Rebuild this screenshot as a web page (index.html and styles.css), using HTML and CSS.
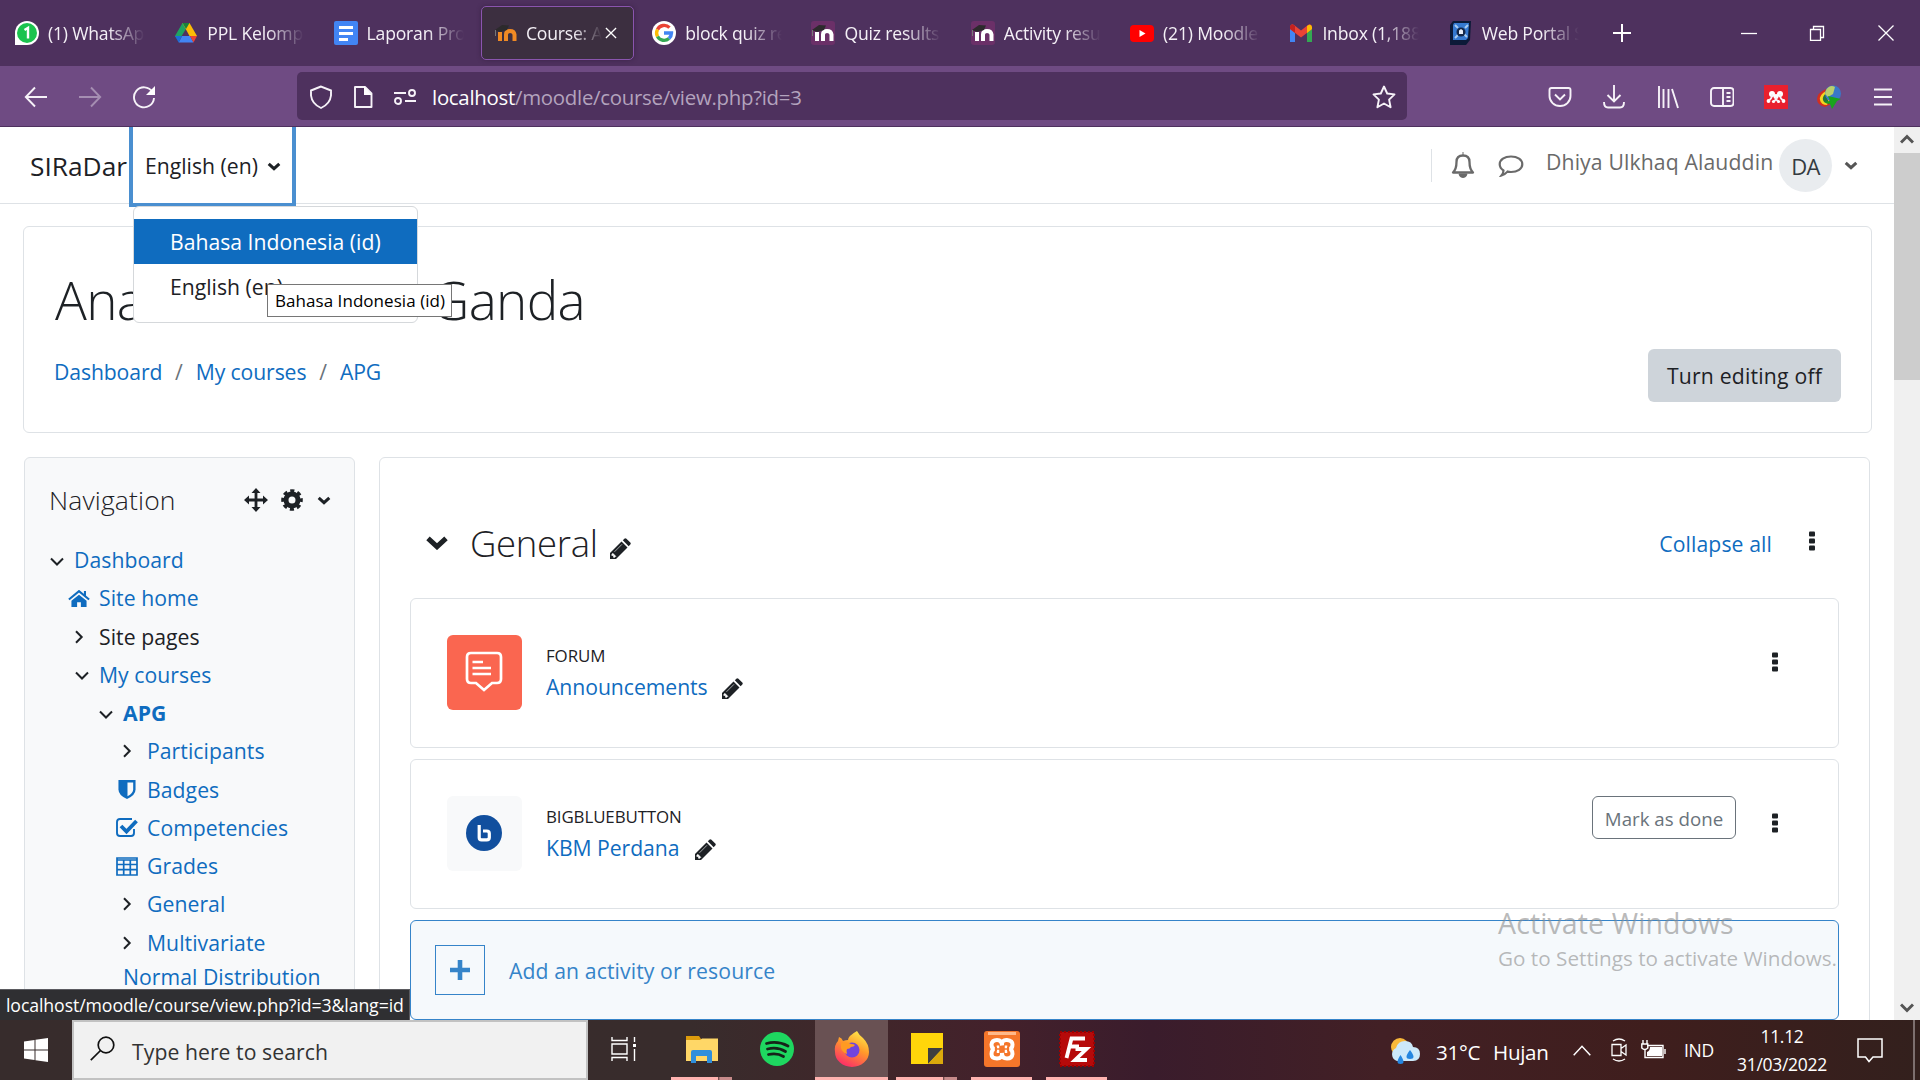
FILE: index.html
```html
<!DOCTYPE html>
<html lang="en">
<head>
<meta charset="utf-8">
<title>Course: Analisis Peubah Ganda</title>
<link rel="stylesheet" href="styles.css">
</head>
<body>
<svg class="defs" width="0" height="0">
  <defs>
    <symbol id="down" viewBox="0 0 14 9"><path d="M1 1.500 7 7.500l6-6" fill="none" stroke="currentColor" stroke-width="2"/></symbol>
    <symbol id="down-bold" viewBox="0 0 14 9"><path d="M1.700 1.800 7 6.700l5.300-4.900" fill="none" stroke="currentColor" stroke-width="3"/></symbol>
    <symbol id="right" viewBox="0 0 9 14"><path d="M1.500 1.200 7.200 7l-5.700 5.800" fill="none" stroke="currentColor" stroke-width="2"/></symbol>
    <symbol id="pencil" viewBox="0 0 21 21"><path d="M0 21v-6L11.500 3.500l6 6L6 21z"/><path d="M12.800 2.300 14.400.7q1-.9 2 0l3.900 3.900q.9 1 0 2l-1.600 1.600z"/><path d="M1.800 16.500v1h1.700v1.800h1.300l1-1-3-3zM4.500 13.800 12 6.300" fill="#fff" stroke="#fff" stroke-width=".6"/></symbol>
    <symbol id="kebab" viewBox="0 0 6 20"><rect width="6" height="5" y=".5" rx="1"/><rect width="6" height="5" y="7.500" rx="1"/><rect width="6" height="5" y="14.500" rx="1"/></symbol>
    <symbol id="moodle" viewBox="0 0 24 24"><path d="M6 20v-9M12 20v-6.500q0-3.500 4-3.500t4.500 3.500V20" fill="none" stroke="currentColor" stroke-width="4"/><path d="M1 9 8 4l7 .5L13 9l-7 2z" fill="#2c2a2c"/><path d="M1.500 9v6" stroke="#777" stroke-width="1"/></symbol>
  </defs>
</svg>

<header class="tabs">
  <div class="tab"><svg viewBox="0 0 24 24"><path d="M0 24V12A12 12 0 1 1 12 24z" fill="#fff"/><circle cx="12" cy="12" r="10" fill="#1bc34f"/><path d="M9.500 9 13 6.800V17.500" fill="none" stroke="#fff" stroke-width="2.400"/></svg><span>(1) WhatsApp</span></div>
  <div class="tab"><svg viewBox="0 0 24 24"><path d="M8.500 2h7l-4 6.500L4.700 20 1 15z" fill="#1ea362"/><path d="M15.500 2 23 15h-7.500L8.500 2z" fill="#fcbc05"/><path d="M8.500 2h7L12 8z" fill="#18813c"/><path d="M4.700 21.500 8 15h8l3.500 6.500z" fill="#4285f4"/><path d="M1 15h7l-3.300 6.500z" fill="#1a6ed8"/><path d="M16 15h7l-3.500 6.500z" fill="#ea4335"/></svg><span>PPL Kelompok</span></div>
  <div class="tab"><svg viewBox="0 0 24 24"><rect width="24" height="24" rx="2" fill="#4285f4"/><path d="M5 6.500h14M5 12.500h14M5 18.500h9" stroke="#fff" stroke-width="2.800"/></svg><span>Laporan Proyek</span></div>
  <div class="tab active"><svg class="orange" viewBox="0 0 24 24"><use href="#moodle"/></svg><span>Course: Analisis</span><svg class="x" viewBox="0 0 13 13"><path d="m1 1 11 11M12 1 1 12" stroke="#fff" stroke-width="1.400"/></svg></div>
  <div class="tab"><svg viewBox="0 0 24 24"><circle cx="12" cy="12" r="12" fill="#fff"/><g fill="none" stroke-width="3.400"><path d="M17.500 6.600A7.500 7.500 0 0 0 5.500 8.500" stroke="#ea4335"/><path d="M5.500 8.500a7.500 7.500 0 0 0 0 7" stroke="#fbbc05"/><path d="M5.500 15.500a7.500 7.500 0 0 0 11.500 2" stroke="#34a853"/><path d="M17 17.500a7.500 7.500 0 0 0 2.500-5.500H12" stroke="#4285f4"/></g></svg><span>block quiz results</span></div>
  <div class="tab"><svg class="plum" viewBox="0 0 24 24"><use href="#moodle"/></svg><span>Quiz results</span></div>
  <div class="tab"><svg class="plum" viewBox="0 0 24 24"><use href="#moodle"/></svg><span>Activity results</span></div>
  <div class="tab"><svg viewBox="0 0 24 24"><rect y="4" width="24" height="17" rx="4" fill="#f00"/><path d="m9.500 9 6 3.500-6 3.500z" fill="#fff"/></svg><span>(21) Moodle</span></div>
  <div class="tab"><svg viewBox="0 0 24 24"><path d="M1 6v15h5V10z" fill="#4285f4"/><path d="M18 10v11h5V6z" fill="#34a853"/><path d="M1 6q1-4 4-2l7 5.500L19 4q3-2 4 2v2l-11 8.500L1 8z" fill="#ea4335"/><path d="M18 5q4-3 5 1v2l-5 4z" fill="#fbbc04"/><path d="M1 6q0-3 3-2.500L6 5v7L1 8z" fill="#c5221f"/></svg><span>Inbox (1,188)</span></div>
  <div class="tab"><svg viewBox="0 0 24 24"><path d="M4 0h18l-1 19-4 5H1V4z" fill="#0c1a38"/><path d="M5 2h15l-1 15-2 2H4V4z" fill="#3579d0"/><path d="m6 4 3 3M19 4l-3 3M6 17l3-3m9 2-3-3" stroke="#a9cdf2" stroke-width="2"/><circle cx="12" cy="11" r="4.500" fill="#142748"/><path d="M10 13V9.500l2-1.500 2 1.500V13z" fill="#e8eef8"/></svg><span>Web Portal Siakad</span></div>
  <svg class="plus" viewBox="0 0 18 18"><path d="M9 0v18M0 9h18" stroke="#fff" stroke-width="2"/></svg>
  <div class="window-buttons">
    <svg viewBox="0 0 16 16"><path d="M0 8.500h16" stroke="#fff" stroke-width="1.300"/></svg>
    <svg viewBox="0 0 16 16"><path d="M1.500 4.500h10v11h-10zM4.500 4V1.500h10v11H12" fill="none" stroke="#fff" stroke-width="1.300"/></svg>
    <svg viewBox="0 0 16 16"><path d="m.5.500 15 15M15.500.500l-15 15" stroke="#fff" stroke-width="1.300"/></svg>
  </div>
</header>

<div class="toolbar">
  <div class="history">
    <svg viewBox="0 0 24 24"><path d="M23 12H2M11 2.500 1.800 12 11 21.500" /></svg>
    <svg class="dim" viewBox="0 0 24 24"><path d="M1 12h21M13 2.500 22.200 12 13 21.500"/></svg>
    <svg viewBox="0 0 24 24"><path d="M20.500 7A10 10 0 1 0 22 13"/><path d="M23 1v9h-9z" fill="#fff" stroke="none"/></svg>
  </div>
  <div class="url">
    <svg viewBox="0 0 24 24"><path d="M12 1.500 2 5.500v5Q3 19 12 23q9-4 10-12.500v-5z"/></svg>
    <svg viewBox="0 0 24 24"><path d="M4 2h10l6.500 6.500V22H4z" stroke-linejoin="round"/><path d="M13 1v9h8z" fill="#fff" stroke="none"/></svg>
    <svg viewBox="0 0 24 24"><path d="M1 8h12M12 16h11"/><circle cx="19" cy="8" r="3"/><circle cx="5" cy="16" r="3"/></svg>
    <p><b>localhost</b>/moodle/course/view.php?id=3</p>
    <svg viewBox="0 0 24 24"><path d="m12 1.500 3.200 7 7.300.9-5.400 5.200 1.500 7.700-6.600-3.800-6.600 3.800 1.500-7.700L1.500 9.400l7.300-.9z" stroke-linejoin="round"/></svg>
  </div>
  <div class="tools">
    <svg viewBox="0 0 24 24"><path d="M3.500 3h17q2 0 2 2v6a10.500 10 0 0 1-21 0V5q0-2 2-2zM7 9.500l5 5 5-5"/></svg>
    <svg viewBox="0 0 24 24"><path d="M12 0v16M5.500 10l6.500 6.500 6.500-6.500M2 17q0 5.500 4 5.500h12q4 0 4-5.500"/></svg>
    <svg viewBox="0 0 24 24"><path d="M3 1v22M7.500 4v19M12.500 4v19M16 4l6 19"/></svg>
    <svg viewBox="0 0 24 24"><rect x="1" y="3" width="22.500" height="18" rx="3"/><path d="M13 3v18M16.500 8h4M16.500 12h4M16.500 16h4"/></svg>
    <svg viewBox="0 0 24 24"><path d="M0 0h24v24H0z" fill="#e9202e" stroke="none"/><g fill="#fff" stroke="none"><circle cx="8" cy="9" r="3"/><circle cx="16" cy="9" r="3"/><circle cx="12" cy="11.500" r="2.500"/><circle cx="4.500" cy="16" r="1.900"/><circle cx="19.500" cy="16" r="1.900"/><circle cx="9.500" cy="16.500" r="1.600"/><circle cx="14.500" cy="16.500" r="1.600"/></g><path d="M5 15q3-1 3-6m11 6q-3-1-3-6M9.500 16.500q2.500-1 2.500-4 0 3 2.500 4" stroke-width="1.800"/></svg>
    <svg viewBox="0 0 24 24"><g stroke="none"><path d="M9 4Q0 8 0 14q0 6 8 8l6-3-6-6z" fill="#d22f20"/><path d="M9 6q-7 4-6 9t7 5l2-4z" fill="#f4d520"/><path d="M9 8q-4 4-3 7t6 4z" fill="#23743b"/><circle cx="16" cy="8.500" r="8" fill="#3a78c8"/><path d="M9 5q4-6 9-3l-2 7-5 3-3-3z" fill="#b9cf6c"/><path d="m11 11 13 3-4 2-5 8-2-5-6-2 6-1z" fill="#18a41c"/></g></svg>
    <svg viewBox="0 0 24 24"><path d="M3 4.500h18M3 12h18M3 19.500h18"/></svg>
  </div>
</div>

<div class="viewport">
  <main class="page">
    <nav class="navbar">
      <span class="brand">SIRaDar</span>
      <div class="lang">
        <span>English (en)</span><svg width="14" height="9"><use href="#down-bold"/></svg>
        <div class="menu">
          <a class="hover">Bahasa Indonesia (id)</a>
          <a>English (en)</a>
          <div class="tip">Bahasa Indonesia (id)</div>
        </div>
      </div>
      <div class="user">
        <i class="rule"></i>
        <svg class="bell" width="24" height="26" viewBox="0 0 24 26"><path d="M2 20.500Q5.500 17 5.500 10q0-6.500 6.500-6.500t6.500 6.500q0 7 3.500 10.500z" fill="none" stroke="currentColor" stroke-width="2.300" stroke-linejoin="round"/><path d="M12 0v4M8 22h8q-.5 3.500-4 3.500T8 22z" fill="currentColor" stroke="currentColor"/></svg>
        <svg class="chat" width="26" height="22" viewBox="0 0 26 22"><path d="M13 1.500c6.500 0 11.300 3.300 11.300 7.800S19.500 17 13 17q-2 0-3.500-.4Q7 19.500 3.500 20.500q2-2.500 2-5Q1.700 13 1.700 9.300C1.700 4.800 6.500 1.500 13 1.500z" fill="none" stroke="currentColor" stroke-width="2.200"/></svg>
        <span class="name">Dhiya Ulkhaq Alauddin</span>
        <span class="avatar">DA</span>
        <svg class="caret" width="14" height="9"><use href="#down-bold"/></svg>
      </div>
    </nav>

    <section class="card head">
      <h1>Analisis Peubah Ganda</h1>
      <div class="sub">
        <p class="crumbs"><a>Dashboard</a><i>/</i><a>My courses</a><i>/</i><a>APG</a></p>
        <button class="edit">Turn editing off</button>
      </div>
    </section>

    <div class="columns">
      <aside class="card side">
        <div class="side-head">
          <h2>Navigation</h2>
          <svg width="24" height="24" viewBox="0 0 24 24"><path d="M12 3v18M3 12h18" stroke="currentColor" stroke-width="2.800"/><path d="m12 0 4.500 5h-9zM12 24l4.500-5h-9zM0 12l5-4.500v9zM24 12l-5-4.500v9z"/></svg>
          <svg class="gear" width="22" height="22" viewBox="0 0 22 22"><circle cx="11" cy="11" r="6" fill="none" stroke="currentColor" stroke-width="5"/><circle cx="11" cy="11" r="9" fill="none" stroke="currentColor" stroke-width="3.600" stroke-dasharray="4 3.070" stroke-dashoffset="2"/></svg>
          <svg class="caret" width="14" height="9"><use href="#down-bold"/></svg>
        </div>
        <ul class="tree">
          <li><svg class="down"><use href="#down"/></svg><a>Dashboard</a></li>
          <li class="l1"><svg class="blue home" viewBox="0 0 23 18"><path d="M11.500 5 3.500 11.500V18H9.500v-5h4v5h6v-6.500z"/><path d="m.8 10 10.700-8.800L22.200 10M17.800 1v6" fill="none" stroke="currentColor" stroke-width="2.200"/></svg><a>Site home</a></li>
          <li class="l1"><svg class="right"><use href="#right"/></svg><span>Site pages</span></li>
          <li class="l1"><svg class="down"><use href="#down"/></svg><a>My courses</a></li>
          <li class="l2"><svg class="down"><use href="#down"/></svg><a class="bold">APG</a></li>
          <li class="l3"><svg class="right"><use href="#right"/></svg><a>Participants</a></li>
          <li class="l3"><svg class="blue" viewBox="0 0 18 20"><path d="M0 0h18v10q0 6-9 10Q0 16 0 10z"/><path d="M9.500 2.500h6V10q0 4-6 7z" fill="#f8f9fa"/></svg><a>Badges</a></li>
          <li class="l3"><svg class="blue" viewBox="0 0 22 19"><path d="M16 1H4Q1 1 1 4v11q0 3 3 3h11q3 0 3-3v-4" fill="none" stroke="currentColor" stroke-width="1.900"/><path d="m5 8 5.500 5.500L20.500 3" fill="none" stroke="currentColor" stroke-width="3.800"/></svg><a>Competencies</a></li>
          <li class="l3"><svg class="blue" viewBox="0 0 22 19"><path d="M1 1h20v17H1zM1 3h20M1 7.500h20M1 12.700h20M7.700 3v15M14.300 3v15" fill="none" stroke="currentColor" stroke-width="1.700"/></svg><a>Grades</a></li>
          <li class="l3"><svg class="right"><use href="#right"/></svg><a>General</a></li>
          <li class="l3"><svg class="right"><use href="#right"/></svg><a>Multivariate</a></li>
          <li class="wrap"><a>Normal Distribution</a></li>
        </ul>
      </aside>

      <section class="card course">
        <div class="section-head">
          <svg width="22" height="14" viewBox="0 0 22 14"><path d="m2 2.300 9 8.400 9-8.400" fill="none" stroke="currentColor" stroke-width="5"/></svg>
          <h3>General</h3>
          <svg class="pen" width="21" height="21"><use href="#pencil"/></svg>
          <a class="collapse">Collapse all</a>
          <svg class="kebab" width="6" height="20"><use href="#kebab"/></svg>
        </div>
        <article class="activity">
          <div class="logo forum"><svg width="38" height="42" viewBox="0 0 38 42"><path d="M6 2h26q4 0 4 4v22q0 4-4 4h-5l-8 7-8-7H6q-4 0-4-4V6q0-4 4-4z" fill="none" stroke="#fff" stroke-width="2.700"/><path d="M7.500 11H18M7.500 17H26M7.500 23H26" stroke="#fff" stroke-width="2.600"/></svg></div>
          <div class="info"><small>FORUM</small><p><a>Announcements</a><svg width="21" height="21"><use href="#pencil"/></svg></p></div>
          <svg class="kebab" width="6" height="20"><use href="#kebab"/></svg>
        </article>
        <article class="activity">
          <div class="logo"><svg width="36" height="36" viewBox="0 0 36 36"><circle cx="18" cy="18" r="18" fill="#114f9e"/><path d="M13.200 10v12.500q0 2.300 2.300 2.300h5.200q2.600 0 2.600-2.300v-4q0-2.500-2.600-2.500H17" fill="none" stroke="#fff" stroke-width="3.200"/></svg></div>
          <div class="info"><small>BIGBLUEBUTTON</small><p><a>KBM Perdana</a><svg class="far" width="21" height="21"><use href="#pencil"/></svg></p></div>
          <button class="done">Mark as done</button>
          <svg class="kebab" width="6" height="20"><use href="#kebab"/></svg>
        </article>
        <div class="add">
          <span class="box"><svg width="20" height="20" viewBox="0 0 20 20"><path d="M10 0v20M0 10h20" stroke="currentColor" stroke-width="4.600"/></svg></span>
          <span class="label">Add an activity or resource</span>
        </div>
      </section>
    </div>
  </main>
  <div class="scrollbar">
    <svg viewBox="0 0 14 9" width="14" height="10"><path d="M1 8l6-6 6 6" fill="none" stroke="#555" stroke-width="3"/></svg>
    <i></i>
    <svg viewBox="0 0 14 9" width="14" height="10"><path d="M1 1l6 6 6-6" fill="none" stroke="#555" stroke-width="3"/></svg>
  </div>
  <div class="status">localhost/moodle/course/view.php?id=3&amp;lang=id</div>
  <div class="watermark"><p>Activate Windows</p><span>Go to Settings to activate Windows.</span></div>
</div>

<footer class="taskbar">
  <div class="start"><svg width="24" height="24" viewBox="0 0 24 24"><path d="M0 3.500 10.500 2v9.500H0zM11.500 1.800 24 0v11.500H11.500zM0 12.500h10.500V22L0 20.500zM11.500 12.500H24V24l-12.500-1.800z" fill="#fff"/></svg></div>
  <div class="search"><svg width="25" height="25" viewBox="0 0 25 25"><circle cx="16" cy="9" r="7.800" fill="none" stroke="#111" stroke-width="1.700"/><path d="M10.500 14.500.8 24.200" stroke="#111" stroke-width="1.700"/></svg><span>Type here to search</span></div>
  <div class="apps">
    <div><svg width="26" height="24" viewBox="0 0 26 24"><path d="M1 0v3.500h15V0M1 24v-3.500h15V24M1 7h15v10H1zM23.500 0v5M23.500 12v12" fill="none" stroke="#fff" stroke-width="1.400"/><path d="M22 7h3v3h-3z" fill="#fff"/></svg></div>
    <div class="open multi"><svg width="32" height="28" viewBox="0 0 32 28"><path d="M0 1h13l2 3v5H0z" fill="#dc9b0c"/><path d="M0 5h14l2-1.500h16V26H0z" fill="#ffd767"/><path d="M5 28V17q0-2 2-2h17q2 0 2 2v11h-5v-7H10v7z" fill="#2f8fdc"/></svg></div>
    <div><svg width="34" height="34" viewBox="0 0 34 34"><circle cx="17" cy="17" r="17" fill="#1ed760"/><path d="M6.500 11.500q11-3 21.500 2.500M7.500 17q10-2.500 18 2.500M8.500 22.500q8.500-2 15 2" fill="none" stroke="#16231a" stroke-width="2.800" stroke-linecap="round"/></svg></div>
    <div class="open current"><svg width="36" height="36" viewBox="0 0 36 36"><defs><linearGradient id="fx" x1=".8" y1="0" x2=".3" y2="1"><stop offset="0" stop-color="#fff04d"/><stop offset=".45" stop-color="#ff9a2a"/><stop offset="1" stop-color="#fb2a6a"/></linearGradient></defs><path d="M23 0q2 4 6 7 6 6 6 14a17 15 0 0 1-34 0Q0 14 4 10l1-4q3 1 4 4 3-1 5-1 0-4 9-9z" fill="url(#fx)"/><circle cx="18" cy="19" r="7.500" fill="#7244dc"/><path d="M7 12q6-2 10 1 3 0 4 1-1 2-4 2-1 2-4 2-1 2 0 5-5-2-6-6z" fill="#ff9a22"/></svg></div>
    <div class="open multi"><svg width="32" height="33" viewBox="0 0 32 33"><path d="M0 1h32v31H0z" fill="#ffd60a"/><path d="M17 16h15L17 32z" fill="#3e3e40"/><path d="M32 16v16H17z" fill="#dba90c"/></svg></div>
    <div class="open"><svg width="36" height="36" viewBox="0 0 36 36"><rect width="36" height="36" rx="3" fill="#f5762a"/><path d="M4 1h28v3H4z" fill="#ffb98a"/><path d="M18 14.500q0-5.500-5-5.500t-5.500 4.500q0 4 3 4.500-3 .5-3 5t5.500 4.500 5-5.500q0 5.500 5 5.500t5.500-4.500q0-4.500-3-5 3-.5 3-4.500T23 9t-5 5.500" fill="none" stroke="#fff" stroke-width="4"/><path d="M14 14.500v1.500h-1M22 14.500v1.500h1M14 22v-2h-1M22 22v-2h1" fill="none" stroke="#fff" stroke-width="2.500"/></svg></div>
    <div class="open"><svg width="36" height="36" viewBox="0 0 36 36"><rect x="1" y="1" width="34" height="34" fill="#b60a0a" stroke="#a00000" stroke-width="2" stroke-dasharray="2 2"/><path d="M7.500 27 12.500 7.500H26M10.500 15.500h9.500M16.500 18h11L16 29h12" fill="none" stroke="#fff" stroke-width="3.800"/></svg></div>
  </div>
  <div class="tray">
    <svg class="weather" width="31" height="27" viewBox="0 0 31 27"><circle cx="10" cy="10" r="9" fill="#f9b93a"/><path d="M7 24a7 7 0 0 1-1-13q2-7 9-7t8 6q7 0 7 7t-7 7z" fill="#cde9fa"/><path d="M10.500 18q6 9 0 9t0-9zM20 13q7 9 0 9t0-9z" fill="#2586e0"/></svg>
    <span class="temp">31°C</span><span class="hujan">Hujan</span>
    <svg class="up" width="18" height="11" viewBox="0 0 18 11"><path d="m.7 10.300 8.300-9 8.300 9" fill="none" stroke="#fff" stroke-width="1.500"/></svg>
    <svg class="cam" width="17" height="24" viewBox="0 0 17 24"><path d="M2 3q6-4 12 0M2 21q6 4 12 0M1 6.500h9v11H1zM10 10.500l5-3.500v10l-5-3.500" fill="none" stroke="#fff" stroke-width="1.300"/></svg>
    <svg class="bat" width="25" height="20" viewBox="0 0 25 20"><path d="M6 5.500h16v12H4V12M24 9v5M2 0v4M6 0v4M.8 4h6v4q-3 3-6 0zM4 9v4" fill="none" stroke="#fff" stroke-width="1.400"/><path d="M9 7h12v9H6v-4q3-1 3-5z" fill="#fff"/></svg>
    <span class="ind">IND</span>
    <p class="clock"><span>11.12</span><span>31/03/2022</span></p>
    <svg class="note" width="26" height="25" viewBox="0 0 26 25"><path d="M1 1h24v18h-9l-4 4.500L8.500 19H1z" fill="none" stroke="#fff" stroke-width="1.500"/></svg>
    <i class="peek"></i>
  </div>
</footer>
</body>
</html>
```
FILE: styles.css
```css
* { box-sizing: border-box; }
body { margin: 0; width: 1920px; height: 1080px; overflow: hidden; background: #fff; color: #1d2125; font: 21.2px/30px "Open Sans", "Noto Sans", sans-serif; letter-spacing: .05px; display: flex; flex-direction: column; }
h1, h2, h3, p, ul { margin: 0; padding: 0; }
h1, h2, h3 { font-weight: 300; }
i { font-style: normal; }
button { font: inherit; letter-spacing: inherit; padding: 0; }
svg { flex: none; fill: currentColor; display: block; }
.defs { position: absolute; }
a { color: #0f6cbf; white-space: nowrap; }

.tabs { height: 66px; background: #4e315e; color: #f4f0f6; display: flex; align-items: center; padding-left: 2px; font-size: 17.6px; letter-spacing: -.2px; }
.tab { flex: none; width: 159.300px; height: 54px; padding: 0 0 0 13px; display: flex; align-items: center; gap: 9px; }
.tab > svg { width: 24px; height: 24px; }
.tab span { width: 97px; overflow: hidden; white-space: nowrap; -webkit-mask-image: linear-gradient(to right, #000 62%, transparent 100%); mask-image: linear-gradient(to right, #000 62%, transparent 100%); }
.tab.active { width: 153px; margin: 0 5.300px 0 1px; padding-left: 12px; gap: 8px; background: #3c2f40; border: 1px solid #8a55ae; border-radius: 5px; box-shadow: 0 0 4px #3b2447; }
.tab.active span { width: 76px; }
.tab.active .x { width: 12px; height: 12px; margin-left: -5px; }
.orange { color: #f08a24; }
.plum { color: #fff; background: #6b3068; border-radius: 3px; }
.plus { width: 18px; height: 18px; margin-left: 18px; }
.window-buttons { display: flex; gap: 52.500px; margin-left: 110px; }
.window-buttons svg { width: 16px; height: 16px; }

.toolbar { height: 61px; background: #6f4b83; border-bottom: 1px solid #4e315e; display: flex; align-items: center; color: #fff; }
.toolbar svg { width: 24px; height: 24px; fill: none; stroke: #f6f2f8; stroke-width: 1.900; }
.history { width: 297px; padding: 1px 0 0 24px; display: flex; gap: 30px; }
.history .dim { opacity: .4; }
.url { width: 1110px; height: 48px; border-radius: 5px; background: #4e315e; display: flex; align-items: center; padding: 1px 11px 0 12px; gap: 18px; }
.url p { flex: 1; margin: 1px 0 0 -3px; font-size: 20.400px; color: #b3a3bd; letter-spacing: -.27px; }
.url b { font-weight: 400; color: #fff; }
.tools { display: flex; gap: 29.900px; margin-left: 141px; padding-top: 1px; }

.viewport { height: 893px; display: flex; position: relative; }
.page { width: 1894px; height: 893px; overflow: hidden; }
.navbar { height: 77px; border-bottom: 1px solid #dee2e6; display: flex; align-items: center; }
.brand { width: 129px; padding: 1px 0 0 30px; font-size: 26.300px; letter-spacing: 0; }
.lang { position: relative; align-self: flex-start; width: 167px; height: 80px; border: 4px solid #4a8fd0; border-top: 0; background: #fff; display: flex; align-items: center; padding: 2px 0 0 12px; gap: 7px; z-index: 3; }
.lang > span { width: 115px; white-space: nowrap; letter-spacing: 0; }
.menu { position: absolute; left: 0; top: 79px; width: 285px; height: 117px; padding-top: 12px; border: 1px solid #d5d8db; border-radius: 6px; background: #fff; }
.menu a { display: block; height: 46px; line-height: 46px; padding-left: 36px; color: #1d2125; letter-spacing: 0; }
.menu .hover { background: #0f6cbf; color: #fff; height: 45px; }
.tip { position: absolute; left: 133px; top: 77px; width: 185px; height: 33px; border: 1px solid #767676; background: #fff; color: #000; font-size: 17px; line-height: 32px; padding-left: 7px; white-space: nowrap; }
.user { margin-left: auto; display: flex; align-items: center; color: #6a6a6a; padding-right: 36px; }
.rule { width: 1px; height: 33px; background: #dee2e6; }
.bell { margin-left: 19px; }
.chat { margin: 2px 0 0 23px; }
.name { width: 233px; margin: -7px 0 0 22px; white-space: nowrap; letter-spacing: .13px; }
.avatar { width: 53px; height: 53px; border-radius: 50%; background: #e9ecef; color: #343a40; text-align: center; line-height: 54px; font-size: 22px; letter-spacing: -.6px; }
.user .caret { margin-left: 12px; color: #555; }

.card { border: 1px solid #dee2e6; border-radius: 6px; }
.head { margin: 22px 0 0 23px; width: 1849px; height: 207px; padding: 37px 30px 0 31px; }
h1 { font-size: 53px; line-height: 72px; letter-spacing: -.65px; }
.sub { display: flex; justify-content: space-between; align-items: flex-start; padding-top: 1px; margin-left: -1px; }
.crumbs { display: flex; padding-top: 20px; }
.crumbs i { width: 33.500px; text-align: center; color: #6a737b; }
.crumbs a { letter-spacing: -.12px; }
.edit { width: 193px; height: 53px; margin-top: 12px; border: 0; border-radius: 6px; background: #ced4da; color: #1d2125; letter-spacing: .2px; }

.columns { display: flex; align-items: flex-start; margin: 24px 0 0 24px; gap: 24px; }
.side { width: 331px; height: 600px; background: #f8f9fa; }
.side-head { display: flex; align-items: center; height: 44px; margin-top: 20px; padding-left: 24px; }
h2 { width: 195px; font-size: 26.500px; letter-spacing: .15px; }
.gear { margin-left: 13px; }
.side-head .caret { margin-left: 14px; }
.tree { list-style: none; margin-top: 19px; }
.tree li { height: 38.250px; display: flex; align-items: center; padding-left: 15px; }
.tree li.l1 { padding-left: 40px; }
.tree li.l2 { padding-left: 64px; }
.tree li.l3 { padding-left: 85px; }
.tree svg { width: 34px; height: 14px; margin-right: 3px; }
.tree .l1 svg { margin-left: -3px; }
.tree .down, .tree .l1 .down { height: 9px; margin: 2px 0 0; }
.tree .blue { height: 19px; color: #0f6cbf; }
.tree .home { height: 17px; }
.bold { font-weight: 700; }
.tree .wrap { height: 30px; padding-left: 98px; }

.course { width: 1491px; height: 600px; padding: 55px 30px 0; }
.section-head { display: flex; align-items: center; height: 60px; padding-left: 16px; }
h3 { width: 126px; margin-left: 22px; font-size: 36.500px; line-height: 50px; letter-spacing: -.3px; white-space: nowrap; }
.pen { margin: 10px 0 0 14px; }
.collapse { margin: 2px 0 0 auto; letter-spacing: .1px; }
.section-head .kebab { margin: -5px 24px 0 37px; }
.activity { width: 1429px; height: 150px; margin-bottom: 11px; border: 1px solid #dee2e6; border-radius: 6px; display: flex; padding: 36px 0 0 36px; }
.section-head + .activity { margin-top: 25px; }
.logo { width: 75px; height: 75px; border-radius: 6px; background: #f8f9fa; display: grid; place-items: center; padding: 0 1px 1px 0; }
.forum { background: #fa6650; }
.info { margin: 6px auto 0 24px; }
.info small { display: block; font-size: 16.900px; line-height: 30px; letter-spacing: -.1px; }
.info p { display: flex; align-items: center; gap: 14px; height: 32px; letter-spacing: -.05px; }
.info p svg { margin-top: 2px; }
.info p .far { margin-left: 2px; }
.activity .kebab { margin: 17px 60px 0 36px; }
.done { width: 144px; height: 43px; border: 1px solid #6a737b; border-radius: 6px; background: #fff; color: #6a737b; font-size: 18.700px; padding-top: 2px; letter-spacing: 0; }
.add { width: 1429px; height: 100px; border: 1px solid #3584c9; border-radius: 6px; background: #f5f9fc; color: #3584c9; display: flex; align-items: center; padding-left: 24px; gap: 24px; }
.box { width: 50px; height: 50px; border: 1px solid #3584c9; display: grid; place-items: center; }
.label { letter-spacing: .1px; padding-top: 2px; }

.scrollbar { width: 26px; background: #f0f0f0; display: flex; flex-direction: column; align-items: center; padding: 7px 0; }
.scrollbar i { width: 26px; height: 227px; margin: 9px 0 auto; background: #cdcdcd; }
.status { position: absolute; left: 0; bottom: 0; width: 410px; height: 31px; background: #2f2f32; border-top: 1px solid #5b5b60; border-right: 1px solid #5b5b60; color: #fff; font-size: 17.700px; line-height: 30px; padding-left: 6px; letter-spacing: -.1px; white-space: nowrap; }
.watermark { position: absolute; left: 1498px; top: 776px; color: rgba(140, 140, 140, .6); white-space: nowrap; }
.watermark p { font-size: 28.500px; line-height: 40px; letter-spacing: .12px; }
.watermark span { font-size: 20.700px; line-height: 30px; letter-spacing: 0; }

.taskbar { height: 60px; display: flex; color: #fff; background: linear-gradient(90deg, #372c2c 0, #382c2c 36%, #40262a 45%, #43212b 52%, #3a1c2c 60%, #422025 72%, #3f1e1d 86%, #33201d 100%); }
.start { width: 72px; display: grid; place-items: center; }
.search { width: 516px; background: #f1f1f1; border: 2px solid #c2c2c2; display: flex; align-items: center; padding-left: 16px; gap: 17px; color: #333; }
.search svg { margin-bottom: 4px; }
.search span { padding-top: 3px; }
.apps { display: flex; padding-left: 1px; }
.apps div { width: 75px; display: grid; place-items: center; padding-bottom: 3px; }
.apps div:first-child { padding-right: 5px; }
.apps .open { background: linear-gradient(#ffb3b0, #ffb3b0) 50% 100% / 61px 3px no-repeat; }
.apps .multi { background: linear-gradient(90deg, #ffb3b0 47px, #55383a 47px, #c78b8b 49px) 50% 100% / 61px 3px no-repeat; }
.apps .current { width: 73px; margin: 0 1px; background: linear-gradient(#ffb3b0, #ffb3b0) 0 100% / 100% 3px no-repeat #695153; }
.tray { margin-left: auto; display: flex; align-items: center; width: 530px; white-space: nowrap; font-size: 20.600px; letter-spacing: -.3px; }
.temp { width: 57px; margin: 3px 0 0 15px; }
.hujan { width: 80px; margin-top: 3px; }
.cam { margin-left: 20px; }
.bat { margin-left: 13px; }
.ind { width: 30px; margin-left: 18px; font-size: 17.500px; }
.clock { width: 104px; margin: 0 0 1px 16px; font-size: 17.500px; line-height: 28px; text-align: center; display: flex; flex-direction: column; }
.note { margin: 0 0 0 23px; }
.peek { width: 2px; height: 60px; margin-left: 30px; background: #7d6f6e; }
```
